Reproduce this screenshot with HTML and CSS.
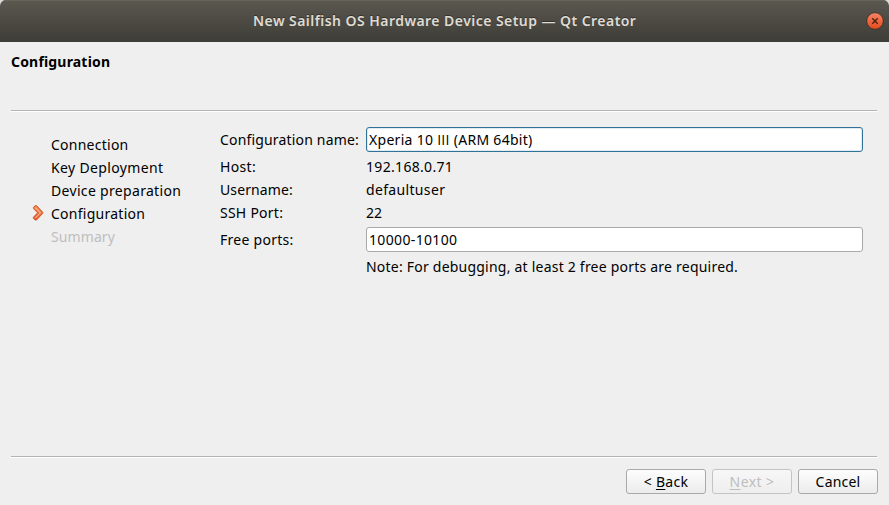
FILE: index.html
```html
<!DOCTYPE html>
<html lang="en">
<head>
<meta charset="utf-8">
<title>New Sailfish OS Hardware Device Setup — Qt Creator</title>
<link rel="stylesheet" href="styles.css">
</head>
<body>
<div class="window">
  <header class="titlebar">
    <span class="title"><span class="t-title">New Sailfish OS Hardware Device Setup — Qt Creator</span></span>
    <svg class="close" width="20" height="20" viewBox="0 0 20 20">
      <defs><linearGradient id="closeFill" x1="0" y1="0" x2="0" y2="1"><stop offset="0" stop-color="#f6876a"/><stop offset=".5" stop-color="#ee6540"/><stop offset="1" stop-color="#e04c1c"/></linearGradient></defs>
      <circle cx="10" cy="10" r="8.4" fill="url(#closeFill)" stroke="#38332c" stroke-width="1"/>
      <path d="M7.3 7.3l5.4 5.4M12.7 7.3l-5.4 5.4" stroke="#4a2410" stroke-width="1.4"/>
    </svg>
  </header>
  <div class="heading"><h1><span class="t-heading">Configuration</span></h1></div>
  <main class="content">
    <ul class="steps">
      <li><span class="t-conn">Connection</span></li>
      <li><span class="t-key">Key Deployment</span></li>
      <li><span class="t-prep">Device preparation</span></li>
      <li class="current">
        <svg class="arrow" width="12" height="16" viewBox="0 0 12 16">
          <defs><linearGradient id="arrowFill" x1="0" y1="0" x2="0" y2="1"><stop offset="0" stop-color="#ee8b52"/><stop offset="1" stop-color="#e2582c"/></linearGradient></defs>
          <path d="M1.4 2.3L3.3.6h1.2L10.7 7.2v1.2L4.5 15H3.2L1.4 13.3v-1L5.6 7.8 1.4 3.4z" fill="url(#arrowFill)" stroke="#cf4f24" stroke-width=".9"/>
          <path d="M3.2 2.5l5.2 5.3-5.2 5.4" fill="none" stroke="#f9b48c" stroke-width="1.1"/>
        </svg>
        <span class="t-conf">Configuration</span></li>
      <li class="disabled"><span class="t-sum">Summary</span></li>
    </ul>
    <div class="form">
      <label class="tall"><span class="t-name">Configuration name:</span></label><div class="field focused"><span class="t-xperia">Xperia 10 <span class="numeral">III</span> (ARM 64bit)</span></div>
      <label><span class="t-host">Host:</span></label><div><span class="t-ip">192.168.0.71</span></div>
      <label><span class="t-user">Username:</span></label><div><span class="t-default">defaultuser</span></div>
      <label><span class="t-ssh">SSH Port:</span></label><div><span class="t-port">22</span></div>
      <label class="tall"><span class="t-free">Free ports:</span></label><div class="field"><span class="t-range">10000-10100</span></div>
      <div class="note"><span class="t-note">Note: For debugging, at least 2 free ports are required.</span></div>
    </div>
  </main>
  <footer class="buttons">
    <div class="button"><span class="t-back">&lt; <span class="key">B</span>ack</span></div>
    <div class="button disabled"><span class="t-next"><span class="key">N</span>ext &gt;</span></div>
    <div class="button"><span class="t-cancel">Cancel</span></div>
  </footer>
</div>
</body>
</html>
```
FILE: styles.css
```css
* { box-sizing: border-box; }
body { margin: 0; background: #d9d9d7; font: 14px/23px "Noto Sans", sans-serif; color: #000; white-space: nowrap; }
.window { width: 889px; height: 505px; display: flex; flex-direction: column; background: #efefef; border-radius: 6px 6px 0 0; overflow: hidden; }
.titlebar { height: 42px; flex: none; display: flex; align-items: center; padding-right: 4px; background: linear-gradient(#5b584f, #3d3c37); box-shadow: inset 0 1px #68645b; color: #dfdbd2; font-weight: 600; text-shadow: 0 -1px #33322e; }
.title { flex: 1; padding: 0 0 2px 253px; }
.heading { height: 69px; flex: none; margin: 0 12px 0 11px; padding-top: 8px; border-bottom: 1px solid #b4b4b4; box-shadow: 0 1px #fff; }
h1 { margin: 0; font-size: 14px; line-height: 23px; font-weight: 700; }
.content { flex: 1; display: flex; padding: 16px 26px 0 0; }
.steps { list-style: none; margin: 0; padding: 6px 0 0 51px; width: 220px; }
.current { position: relative; }
.arrow { position: absolute; left: -19px; top: 3px; }
.form { width: 643px; height: 151px; display: grid; grid-template-columns: 146px 497px; grid-template-rows: 28px 23px 23px 23px 31px 23px; }
.tall { line-height: 26px; }
.tall ~ .tall { line-height: 31px; }
.field { height: 25px; padding-left: 2px; border: 1px solid #a9a9a9; border-radius: 3px; background: #fff; line-height: 23px; }
.field:not(.focused) { margin-top: 3px; }
.focused { border-color: #307397; box-shadow: inset 0 0 0 1px #dfebf1; }
.note { grid-column: 2; }
.buttons { height: 49px; flex: none; display: flex; justify-content: flex-end; gap: 6px; margin: 0 12px 0 11px; padding-top: 12px; border-top: 1px solid #b4b4b4; box-shadow: inset 0 1px #fff; }
.button { width: 80px; height: 25px; flex: none; border: 1px solid #a9a9a9; border-radius: 3px; background: linear-gradient(#fdfdfd, #ececec); text-align: center; line-height: 23px; }
.button:last-child { margin-right: -1px; }
.disabled { color: #bebebe; }
.button.disabled { border-color: #c4c4c4; background: linear-gradient(#f7f7f7, #eee); }
.key { text-decoration: underline; text-decoration-thickness: 1px; text-underline-offset: 2px; }
.numeral { font-family: "Open Sans", sans-serif; line-height: 1; }

.t-title { letter-spacing: .45px; }
.t-heading { letter-spacing: .18px; }
.t-conn { letter-spacing: .25px; }
.t-key { letter-spacing: .35px; }
.t-prep { letter-spacing: .32px; }
.t-conf { letter-spacing: .26px; }
.t-sum { letter-spacing: .1px; }
.t-name { letter-spacing: .17px; }
.t-xperia { letter-spacing: .29px; }
.t-host { letter-spacing: .35px; }
.t-ip { letter-spacing: .32px; }
.t-user { letter-spacing: .12px; }
.t-default { letter-spacing: .34px; }
.t-ssh { letter-spacing: .25px; }
.t-free { letter-spacing: .27px; }
.t-range { letter-spacing: .35px; }
.t-note { letter-spacing: .22px; }
.t-back { letter-spacing: .3px; }
.t-next { letter-spacing: .4px; }
.t-cancel { letter-spacing: .2px; }
```
